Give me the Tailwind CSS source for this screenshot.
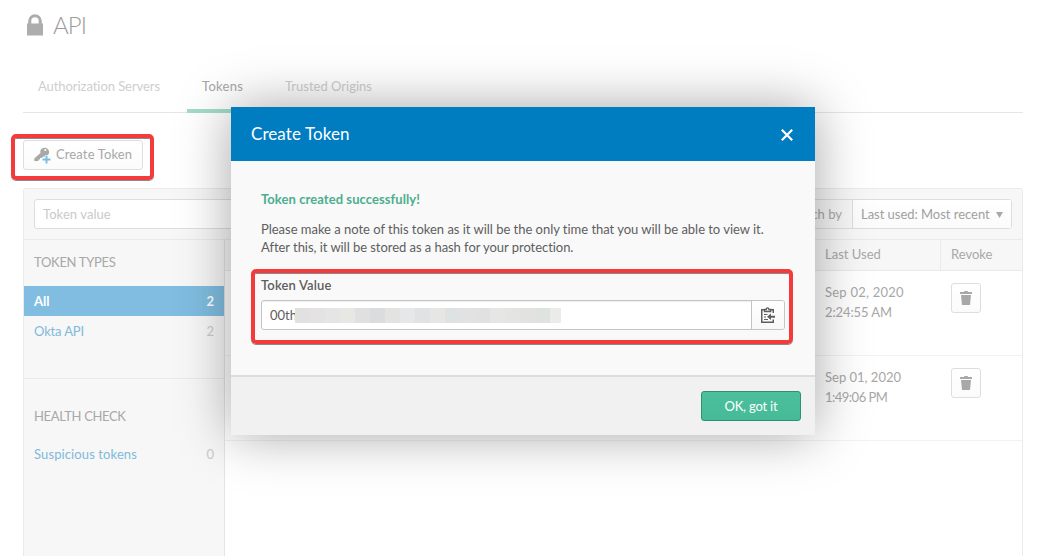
<!DOCTYPE html>
<html lang="en">
<head>
<meta charset="utf-8">
<title>API - Tokens</title>
<script src="https://cdn.jsdelivr.net/npm/@tailwindcss/browser@4"></script>
</head>
<body class="relative h-[556px] w-[1041px] overflow-hidden bg-white font-['Lato',sans-serif] text-[13px] leading-5 text-[#a8a8a8]">

<div class="flex h-full flex-col pr-[18px] pl-[23px]">
  <header class="flex h-[51px] shrink-0 items-center gap-[10px] pl-1">
    <svg class="mb-px h-[22px] w-4" viewBox="0 0 16 22" fill="#adadad"><path d="M0 9.500h1.200V7a6.800 6.800 0 0 1 13.600 0v2.500H16V21.500H0zM4.300 9.500h7.400V7a3.700 3.700 0 0 0-7.400 0z"/></svg>
    <h1 class="mb-[2px] text-[24px] leading-8 font-light tracking-[-0.9px] text-[#9c9c9c]">API</h1>
  </header>

  <nav class="mt-[10px] flex h-[52px] shrink-0 gap-3 border-b border-[#e6e6e6] text-[#cecece]">
    <span class="h-[52px] px-[15px] pt-[15px] tracking-[-0.06px]">Authorization Servers</span>
    <span class="h-[52px] w-[72px] border-b-4 border-[#a3dcc9] px-[15px] pt-[15px] tracking-[0.25px] text-[#a6a6a6]">Tokens</span>
    <span class="h-[52px] px-[14px] pt-[15px]">Trusted Origins</span>
  </nav>

  <div class="flex h-[75px] shrink-0 pt-[27px]">
    <button class="flex h-[30px] w-[120px] items-center rounded-[3px] border border-[#dedede] bg-gradient-to-b from-white to-[#fbfbfb] pl-[10px] tracking-[0.13px]">
      <svg class="mr-[5px] h-[17px] w-[17px]" viewBox="0 0 17 17"><path fill="#a8a8a8" fill-rule="evenodd" d="M7 2.500C8.500.5 12 .2 13.800 2s1.800 4.500 0 6.300c-1.200 1.200-3 1.600-4.500 1.100L7.500 11H6v1.500H4.500V14H.3v-2.500L6.500 6c-.4-1.300-.2-2.600.5-3.500zM10.200 3a1.100 1.100 0 1 0 2.200 0 1.100 1.100 0 1 0-2.200 0z"/><path stroke="#fff" stroke-width="3" d="M12.500 8v8M8 12.500h9"/><path stroke="#7bbde2" stroke-width="2" d="M12.500 8.500v8M8.500 12.500h8"/></svg>
      <span class="mb-[2px]">Create Token</span>
    </button>
  </div>

  <section class="flex min-h-0 w-[1000px] grow flex-col rounded-t-[3px] border border-b-0 border-[#eaeaea]">
    <div class="flex h-[51px] shrink-0 items-center justify-between border-b border-[#eaeaea] bg-[#f7f7f7] px-[10px]">
      <div class="flex h-[30px] w-[400px] items-center rounded-[3px] border border-[#dedede] bg-white pb-px pl-2 tracking-[0.07px] text-[#cacaca]">Token value</div>
      <div class="flex h-[30px] rounded-[3px] border border-[#dedede]">
        <span class="flex w-[72px] items-center justify-end pr-[10px] pb-px">Search by</span>
        <span class="flex w-[159px] items-center justify-between border-l border-[#dedede] bg-gradient-to-b from-white to-[#fbfbfb] pr-2 pb-px pl-2 tracking-[-0.03px] text-[#a0a0a0]">Last used: Most recent
          <svg class="mt-[2px] h-[6px] w-[7px]" viewBox="0 0 7 6" fill="#a8a8a8"><path d="M0 0h7L3.500 6z"/></svg>
        </span>
      </div>
    </div>

    <div class="flex min-h-0 grow">
      <aside class="w-[201px] shrink-0 border-r border-[#e4e4e4] bg-[#f7f7f7]">
        <h2 class="h-[46px] px-[10px] pt-3 tracking-[-0.3px]">TOKEN TYPES</h2>
        <div class="flex h-[30px] items-center justify-between bg-[#80bde0] px-[10px] pb-px font-bold text-white"><span>All</span><span>2</span></div>
        <div class="flex h-[30px] items-center justify-between px-[10px]"><span class="tracking-[-0.15px] text-[#80b9da]">Okta API</span><span class="text-[#cacaca]">2</span></div>
        <h2 class="mt-8 h-[61px] border-t border-[#eaeaea] px-[10px] pt-[27px] tracking-[-0.35px]">HEALTH CHECK</h2>
        <div class="flex h-[30px] items-center justify-between px-[10px]"><span class="tracking-[0.11px] text-[#80b9da]">Suspicious tokens</span><span class="text-[#cacaca]">0</span></div>
      </aside>

      <div class="grow">
        <div class="flex h-[31px] justify-end border-b border-[#eaeaea] bg-[#f7f7f7] leading-[29px]">
          <span class="w-[126px] pl-[11px]">Last Used</span>
          <span class="w-[82px] border-l border-[#eaeaea] pl-[10px]">Revoke</span>
        </div>
        <div class="flex h-[85px] justify-end border-b border-[#f2f2f2] pt-3">
          <p class="-mt-px w-[126px] pl-[11px]"><span class="tracking-[0.24px]">Sep 02, 2020</span><br><span class="tracking-[-0.1px]">2:24:55 AM</span></p>
          <div class="w-[82px] pl-[11px]">
            <button class="flex h-[30px] w-[30px] items-center justify-center rounded-[3px] border border-[#dedede] bg-gradient-to-b from-white to-[#fbfbfb]"><svg class="h-[14px] w-3" viewBox="0 0 12 14" fill="#a8a8a8"><path d="M0 1h3.800l.7-1h3l.7 1H12v2H0zM1 4h10l-1 10H2z"/></svg></button>
          </div>
        </div>
        <div class="flex h-[85px] justify-end border-b border-[#f2f2f2] pt-3">
          <p class="-mt-px w-[126px] pl-[11px]"><span class="">Sep 01, 2020</span><br><span class="tracking-[-0.5px]">1:49:06 PM</span></p>
          <div class="w-[82px] pl-[11px]">
            <button class="flex h-[30px] w-[30px] items-center justify-center rounded-[3px] border border-[#dedede] bg-gradient-to-b from-white to-[#fbfbfb]"><svg class="h-[14px] w-3" viewBox="0 0 12 14" fill="#a8a8a8"><path d="M0 1h3.800l.7-1h3l.7 1H12v2H0zM1 4h10l-1 10H2z"/></svg></button>
          </div>
        </div>
      </div>
    </div>
  </section>
</div>

<!-- dialog -->
<div class="absolute top-[107px] left-[231px] flex h-[328px] w-[584px] flex-col bg-[#f9f9f9] text-[#5e5e5e] shadow-[0_0_50px_rgba(0,0,0,0.35)]">
  <div class="flex h-[54px] shrink-0 items-center justify-between bg-[#007dc1] pr-[22px] pl-5 text-white">
    <h2 class="mb-px text-[17px] leading-6 tracking-[0.08px]">Create Token</h2>
    <svg class="mt-[2px] h-3 w-3" viewBox="0 0 12 12" stroke="#fff" stroke-width="2.200"><path d="M.8.8l10.400 10.400M11.200.8L.8 11.200"/></svg>
  </div>
  <div class="grow px-[30px] pt-7">
    <p class="font-bold tracking-[0.07px] text-[#4cae8e]">Token created successfully!</p>
    <p class="mt-[11px] leading-[18px] whitespace-nowrap"><span class="tracking-[-0.025px]">Please make a note of this token as it will be the only time that you will be able to view it.</span><br><span class="tracking-[-0.05px]">After this, it will be stored as a hash for your protection.</span></p>
    <p class="mt-[19px] font-semibold tracking-[0.15px]">Token Value</p>
    <div class="mt-[5px] flex h-[30px] rounded-[3px] border border-[#c4c4c4] bg-white shadow-[inset_0_1px_1px_#eeeeee]">
      <div class="flex w-[489px] items-center pl-2">
        <span class="mb-px w-[25px]">00th</span>
        <span class="relative flex h-[15px]">
          <i class="w-[15px] bg-[#e1e1e1]"></i><i class="w-[15px] bg-[#e4e2e2]"></i><i class="w-[15px] bg-[#e6e5e5]"></i><i class="w-[15px] bg-[#e7e7e4]"></i><i class="w-[15px] bg-[#dfe0df]"></i><i class="w-[15px] bg-[#dadcde]"></i><i class="w-[15px] bg-[#e3e4e2]"></i><i class="w-[15px] bg-[#e6e7e9]"></i><i class="w-[15px] bg-[#e0e2e4]"></i><i class="w-[15px] bg-[#e6e6e4]"></i><i class="w-[15px] bg-[#dfe2e3]"></i><i class="w-[15px] bg-[#e2e2e2]"></i><i class="w-[15px] bg-[#e2e1e1]"></i><i class="w-[15px] bg-[#e6e6e7]"></i><i class="w-[15px] bg-[#e4e4e2]"></i><i class="w-[15px] bg-[#e2e2e0]"></i><i class="w-[15px] bg-[#dfe3e0]"></i><i class="w-[11px] bg-[#ebebe9]"></i>
        </span>
      </div>
      <div class="flex grow items-center justify-center rounded-r-[2px] border-l border-[#c4c4c4] bg-gradient-to-b from-white to-[#f8f8f8]">
        <svg class="h-4 w-[14px]" viewBox="0 0 14 16" fill="none" stroke="#5e5e5e"><path stroke-width="1.500" d="M4 2.750H.75v12.500h11.500V12.500M9 2.750h3.250V6"/><path stroke-width="1.300" d="M3.500 4.500v-2h1.800C5.300.2 7.900.2 7.900 2.500h1.800v2z"/><path d="M3 7.500h3.500M3 10h2M3 12.500h4"/><path fill="#5e5e5e" stroke="none" d="M6 9.750l4-3.250V8.750H14v2H10V13z"/></svg>
      </div>
    </div>
  </div>
  <div class="flex h-[60px] shrink-0 justify-end border-t-2 border-[#dddddd] bg-[#f1f1f1] pt-[14px] pr-[14px]">
    <button class="h-[30px] w-[100px] rounded-[3px] border border-[#2f8f70] bg-gradient-to-b from-[#4cbf9c] to-[#46bb97] tracking-[-0.2px] text-white">OK, got it</button>
  </div>
</div>

<!-- callouts -->
<div class="absolute top-[134px] left-[11px] h-[46px] w-[143px] rounded-[5px] border-4 border-[#f43b3b] shadow-[inset_0_1px_0_#8a8a8a,0_1px_0_#8a8a8a]"></div>
<div class="absolute top-[269px] left-[251px] h-[75px] w-[542px] rounded-[5px] border-4 border-[#f43b3b] shadow-[inset_0_1px_0_#8a8a8a,0_1px_0_#8a8a8a]"></div>

</body>
</html>
